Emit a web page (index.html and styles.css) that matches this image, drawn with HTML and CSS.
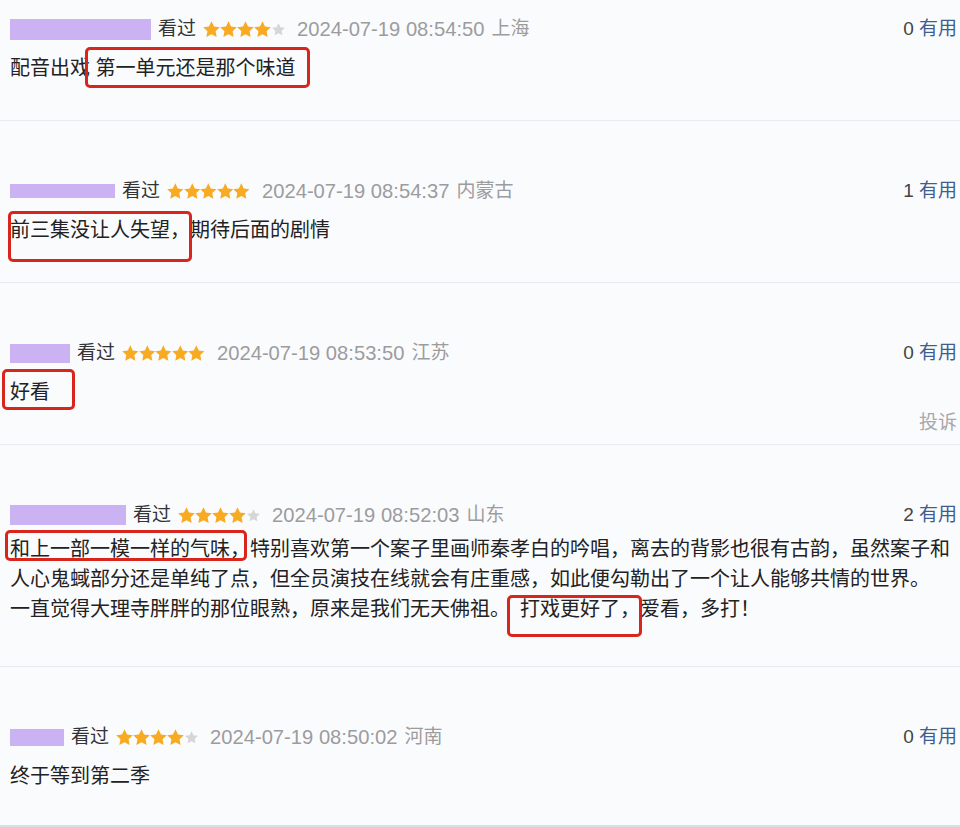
FILE: index.html
```html
<!DOCTYPE html>
<html lang="zh-CN">
<head>
<meta charset="utf-8">
<title>短评</title>
<link rel="stylesheet" href="styles.css">
</head>
<body>
<svg class="defs" width="0" height="0" aria-hidden="true">
  <symbol id="star" viewBox="1.4 1.2 21.2 21.2">
    <path d="M12 1.6l3.15 6.55 7.2.95-5.28 4.98 1.35 7.12L12 17.75l-6.42 3.45 1.35-7.12L1.65 9.1l7.2-.95z"/>
  </symbol>
</svg>
<div class="list">
  <div class="item">
    <div class="head">
      <span class="mask" style="width:141px;height:21px"></span>
      <span class="watched">看过</span>
      <span class="stars"><svg class="on"><use href="#star"/></svg><svg class="on"><use href="#star"/></svg><svg class="on"><use href="#star"/></svg><svg class="on"><use href="#star"/></svg><svg class="off"><use href="#star"/></svg></span>
      <span class="time">2024-07-19 08:54:50</span>
      <span class="loc">上海</span>
      <span class="votes"><span class="num">0</span> <span class="useful">有用</span></span>
    </div>
    <p class="text">配音出戏 <span class="mark m1">第一单元还是那个味道</span></p>
  </div>

  <div class="item">
    <div class="head">
      <span class="mask" style="width:105px;height:14px"></span>
      <span class="watched">看过</span>
      <span class="stars five"><svg class="on"><use href="#star"/></svg><svg class="on"><use href="#star"/></svg><svg class="on"><use href="#star"/></svg><svg class="on"><use href="#star"/></svg><svg class="on"><use href="#star"/></svg></span>
      <span class="time">2024-07-19 08:54:37</span>
      <span class="loc">内蒙古</span>
      <span class="votes"><span class="num">1</span> <span class="useful">有用</span></span>
    </div>
    <p class="text"><span class="mark m2">前三集没让人失望，</span>期待后面的剧情</p>
  </div>

  <div class="item">
    <div class="head">
      <span class="mask" style="width:60px;height:19px"></span>
      <span class="watched">看过</span>
      <span class="stars five"><svg class="on"><use href="#star"/></svg><svg class="on"><use href="#star"/></svg><svg class="on"><use href="#star"/></svg><svg class="on"><use href="#star"/></svg><svg class="on"><use href="#star"/></svg></span>
      <span class="time">2024-07-19 08:53:50</span>
      <span class="loc">江苏</span>
      <span class="votes"><span class="num">0</span> <span class="useful">有用</span></span>
    </div>
    <p class="text"><span class="mark m3">好看</span></p>
    <span class="report">投诉</span>
  </div>

  <div class="item dense">
    <div class="head">
      <span class="mask" style="width:116px;height:20px"></span>
      <span class="watched">看过</span>
      <span class="stars"><svg class="on"><use href="#star"/></svg><svg class="on"><use href="#star"/></svg><svg class="on"><use href="#star"/></svg><svg class="on"><use href="#star"/></svg><svg class="off"><use href="#star"/></svg></span>
      <span class="time">2024-07-19 08:52:03</span>
      <span class="loc">山东</span>
      <span class="votes"><span class="num">2</span> <span class="useful">有用</span></span>
    </div>
    <p class="text"><span class="mark m4">和上一部一模一样的气味，</span>特别喜欢第一个案子里画师秦孝白的吟唱，离去的背影也很有古韵，虽然案子和<br>人心鬼蜮部分还是单纯了点，但全员演技在线就会有庄重感，如此便勾勒出了一个让人能够共情的世界。<br>一直觉得大理寺胖胖的那位眼熟，原来是我们无天佛祖。&ensp;<span class="mark m5">打戏更好了，</span>爱看，多打！</p>
  </div>

  <div class="item last">
    <div class="head">
      <span class="mask" style="width:54px;height:17px"></span>
      <span class="watched">看过</span>
      <span class="stars"><svg class="on"><use href="#star"/></svg><svg class="on"><use href="#star"/></svg><svg class="on"><use href="#star"/></svg><svg class="on"><use href="#star"/></svg><svg class="off"><use href="#star"/></svg></span>
      <span class="time">2024-07-19 08:50:02</span>
      <span class="loc">河南</span>
      <span class="votes"><span class="num">0</span> <span class="useful">有用</span></span>
    </div>
    <p class="text">终于等到第二季</p>
  </div>
</div>
</body>
</html>
```

FILE: styles.css
```css
* { box-sizing: border-box; }

html, body {
  margin: 0;
  padding: 0;
  background: #fafbfd;
}

body {
  width: 960px;
  height: 827px;
  overflow: hidden;
  font-family: "Liberation Sans", "Noto Sans CJK SC", sans-serif;
  color: #222;
}

.defs { position: absolute; width: 0; height: 0; overflow: hidden; }

.list {
  display: flex;
  flex-direction: column;
}

.item {
  position: relative;
  padding: 58px 3px 37px 10px;
  border-bottom: 1px solid #e7eaef;
}

.item:first-child { padding-top: 17px; }

.item.dense { padding-bottom: 42px; }
.item.dense .text { margin-top: 7px; }

.item.last {
  padding-bottom: 34px;
  border-bottom: 2px solid #dadde2;
}

.head {
  display: flex;
  align-items: center;
  height: 24px;
  font-size: 19px;
  line-height: 24px;
  white-space: nowrap;
}

.mask {
  display: block;
  flex: none;
  background: #cbb2f3;
  margin-right: 7px;
}

.watched { color: #333; margin-right: 7px; }

.stars {
  display: flex;
  align-items: center;
  margin-right: 12px;
}

.stars svg { display: block; }
.stars .on { width: 17px; height: 17px; fill: #f7aa22; }
.stars.five .on { width: 16.6px; height: 16.6px; }
.stars .off { width: 13px; height: 13px; fill: #d6d6d9; margin-left: 1px; }

.time { color: #9c9c9f; font-size: 20.2px; margin-right: 7px; }
.loc { color: #9c9c9f; font-size: 19px; }

.votes {
  margin-left: auto;
  font-size: 19px;
}
.votes .num { color: #444; }
.votes .useful { color: #3f5e8e; }

.text {
  margin: 12px 0 0;
  font-size: 20px;
  line-height: 30px;
  color: #222;
  white-space: nowrap;
}

.mark {
  position: relative;
  display: inline-block;
}

.mark::after {
  content: "";
  position: absolute;
  border: 3px solid #d8261d;
  border-radius: 5px;
}

.m1::after { top: -6px; bottom: -5px; left: -11px; right: -14px; }
.m2::after { top: -4px; bottom: -17px; left: -2px; right: -2px; }
.m3::after { top: -8px; bottom: -3px; left: -8px; right: -25px; }
.m4::after { top: -4px; bottom: 3px; left: -5px; right: 3px; }
.m5::after { top: 1px; bottom: -13px; left: -13px; right: -2px; }

.report {
  position: absolute;
  right: 3px;
  bottom: 9px;
  font-size: 19px;
  line-height: 24px;
  color: #a8a8ab;
}
```
